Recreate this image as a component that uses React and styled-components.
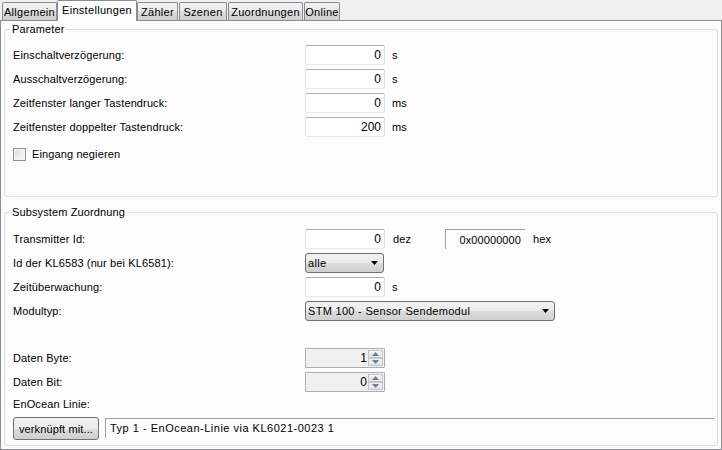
import React from "react";
import styled, { createGlobalStyle, css } from "styled-components";

const Global = createGlobalStyle`
  html, body { margin: 0; padding: 0; background: #f0f0f0; }
  body {
    font-family: "Liberation Sans", Arial, sans-serif;
    font-size: 11px;
    letter-spacing: 0.12px;
    color: #000;
  }
  * { box-sizing: border-box; }
`;

const Window = styled.div`
  width: 722px;
  height: 450px;
  display: flex;
  flex-direction: column;
  background: #f0f0f0;
`;

const TabStrip = styled.div`
  display: flex;
  align-items: flex-end;
  height: 21px;
  padding-left: 2px;
  margin-bottom: -1px;
  position: relative;
  z-index: 1;
`;

const Tab = styled.div`
  width: ${(p) => p.$w}px;
  height: 18px;
  margin-bottom: 1px;
  margin-right: 1px;
  border: 1px solid #898c95;
  border-bottom: none;
  border-radius: 2px 2px 0 0;
  background: linear-gradient(#f2f2f2 0%, #ebebeb 50%, #dddddd 50%, #cfcfcf 100%);
  display: flex;
  align-items: center;
  justify-content: center;
  line-height: 13px;
  padding-top: 1px;
  white-space: nowrap;
  letter-spacing: 0.3px;
  ${(p) =>
    p.$active &&
    css`
      height: 21px;
      margin-bottom: 0;
      margin-left: -1px;
      margin-right: 0;
      background: #fcfcfc;
      padding-top: 0;
      padding-bottom: 2px;
    `}
`;

const Panel = styled.div`
  flex: 1;
  border: 1px solid #898c95;
  background: #fcfcfc;
  padding: 2px 3px 3px 3px;
  display: flex;
  flex-direction: column;
  gap: 9px;
`;

const Group = styled.fieldset`
  margin: 0;
  min-width: 0;
  height: ${(p) => p.$h}px;
  border: 1px solid #d5dfe5;
  border-radius: 3px;
  padding: ${(p) => p.$pt}px 3px 0 8px;
  display: flex;
  flex-direction: column;
`;

const Legend = styled.legend`
  padding: 0 2px;
  margin-left: -3px;
  line-height: 13px;
  font-size: 11px;
`;

const Row = styled.div`
  display: flex;
  align-items: center;
  height: ${(p) => p.$h || 24}px;
  flex: none;
  margin-top: ${(p) => p.$mt || 0}px;
`;

const Label = styled.span`
  width: 292px;
  flex: none;
  white-space: nowrap;
`;

const TextBox = styled.div`
  width: 80px;
  height: 20px;
  border: 1px solid #dbdfe6;
  border-top-color: #abadb3;
  border-bottom-color: #e3e9ef;
  border-radius: 2px;
  background: #fff;
  text-align: right;
  padding-right: 3px;
  line-height: 18px;
  font-size: 12px;
  letter-spacing: 0;
`;

const Unit = styled.span`
  padding-left: ${(p) => p.$pl || 7}px;
  ${(p) => p.$w && css`width: ${p.$w}px;`}
  flex: none;
`;

const HexBox = styled.div`
  width: 80px;
  height: 20px;
  border-top: 1px solid #a0a0a0;
  border-left: 1px solid #a0a0a0;
  text-align: right;
  padding-right: 4px;
  line-height: 20px;
  font-size: 11px;
  letter-spacing: 0.1px;
`;

const Combo = styled.div`
  width: ${(p) => p.$w}px;
  height: 20px;
  border: 1px solid #707070;
  border-radius: 3px;
  background: linear-gradient(#f2f2f2 0%, #ebebeb 50%, #dddddd 50%, #cfcfcf 100%);
  display: flex;
  align-items: center;
  justify-content: space-between;
  padding: 0 5px 0 2px;
  font-size: 11px;
  letter-spacing: 0.3px;
`;

const Arrow = () => (
  <svg width="7" height="4" viewBox="0 0 7 4">
    <path d="M0 0H7L3.5 4Z" fill="#000" />
  </svg>
);

const Spin = styled.div`
  width: 80px;
  height: 20px;
  border: 1px solid #adadad;
  border-radius: 1px;
  background: #f0f0f0;
  display: flex;
  padding: 1px;
`;

const SpinValue = styled.div`
  flex: 1;
  text-align: right;
  padding-right: 1px;
  line-height: 16px;
  font-size: 12px;
`;

const SpinButtons = styled.div`
  width: 15px;
  display: flex;
  flex-direction: column;
`;

const SpinBtn = styled.div`
  flex: 1;
  border: 1px solid #c4c8cc;
  background: linear-gradient(#f4f4f4, #e2e2e2);
  display: flex;
  align-items: center;
  justify-content: center;
`;

const SpinArrow = ({ up }) => (
  <svg width="7" height="4" viewBox="0 0 7 4">
    <path d={up ? "M0 4H7L3.5 0Z" : "M0 0H7L3.5 4Z"} fill="#6b7fa6" />
  </svg>
);

const CheckBox = styled.div`
  width: 13px;
  height: 13px;
  border: 1px solid #8e8f8f;
  background: linear-gradient(135deg, #dcdcdc, #fdfdfd);
  box-shadow: inset 0 0 0 1px #f4f4f4;
  flex: none;
`;

const CheckLabel = styled.span`
  margin-left: 6px;
`;

const Spacer = styled.div`
  height: ${(p) => p.$h}px;
  flex: none;
`;

const Button = styled.div`
  width: 86px;
  height: 23px;
  border: 1px solid #707070;
  border-radius: 3px;
  background: linear-gradient(#f2f2f2 0%, #ebebeb 50%, #dddddd 50%, #cfcfcf 100%);
  display: flex;
  align-items: center;
  justify-content: center;
  margin-right: 6px;
  flex: none;
`;

const LinkField = styled.div`
  flex: 1;
  align-self: flex-start;
  margin-top: 1px;
  height: 20px;
  border-top: 1px solid #a0a0a0;
  border-left: 1px solid #a0a0a0;
  padding-left: 4px;
  line-height: 19px;
  font-size: 11px;
  letter-spacing: 0.5px;
`;

const tabs = [
  { t: "Allgemein", w: 55 },
  { t: "Einstellungen", w: 80, active: true },
  { t: "Zähler", w: 41 },
  { t: "Szenen", w: 48 },
  { t: "Zuordnungen", w: 75 },
  { t: "Online", w: 36 },
];

const params = [
  ["Einschaltverzögerung:", "0", "s"],
  ["Ausschaltverzögerung:", "0", "s"],
  ["Zeitfenster langer Tastendruck:", "0", "ms"],
  ["Zeitfenster doppelter Tastendruck:", "200", "ms"],
];

const SpinField = ({ value }) => (
  <Spin>
    <SpinValue>{value}</SpinValue>
    <SpinButtons>
      <SpinBtn><SpinArrow up /></SpinBtn>
      <SpinBtn><SpinArrow /></SpinBtn>
    </SpinButtons>
  </Spin>
);

export default function App() {
  return (
    <>
      <Global />
      <Window>
        <TabStrip>
          {tabs.map((t) => (
            <Tab key={t.t} $w={t.w} $active={t.active}>
              {t.t}
            </Tab>
          ))}
        </TabStrip>
        <Panel>
          <Group $h={174} $pt={7}>
            <Legend>Parameter</Legend>
            {params.map(([l, v, u]) => (
              <Row key={l}>
                <Label>{l}</Label>
                <TextBox>{v}</TextBox>
                <Unit>{u}</Unit>
              </Row>
            ))}
            <Row $mt={3}>
              <CheckBox />
              <CheckLabel>Eingang negieren</CheckLabel>
            </Row>
          </Group>
          <Group $h={240} $pt={8}>
            <Legend>Subsystem Zuordnung</Legend>
            <Row>
              <Label>Transmitter Id:</Label>
              <TextBox>0</TextBox>
              <Unit $w={60} $pl={8}>dez</Unit>
              <HexBox>0x00000000</HexBox>
              <Unit $pl={8}>hex</Unit>
            </Row>
            <Row>
              <Label>Id der KL6583 (nur bei KL6581):</Label>
              <Combo $w={79}>
                alle
                <Arrow />
              </Combo>
            </Row>
            <Row>
              <Label>Zeitüberwachung:</Label>
              <TextBox>0</TextBox>
              <Unit>s</Unit>
            </Row>
            <Row>
              <Label>Modultyp:</Label>
              <Combo $w={250}>
                STM 100 - Sensor Sendemodul
                <Arrow />
              </Combo>
            </Row>
            <Spacer $h={23} />
            <Row>
              <Label>Daten Byte:</Label>
              <SpinField value="1" />
            </Row>
            <Row>
              <Label>Daten Bit:</Label>
              <SpinField value="0" />
            </Row>
            <Row $h={20}>
              <Label>EnOcean Linie:</Label>
            </Row>
            <Row $h={23} $mt={3}>
              <Button>verknüpft mit...</Button>
              <LinkField>Typ 1 - EnOcean-Linie via KL6021-0023 1</LinkField>
            </Row>
          </Group>
        </Panel>
      </Window>
    </>
  );
}
